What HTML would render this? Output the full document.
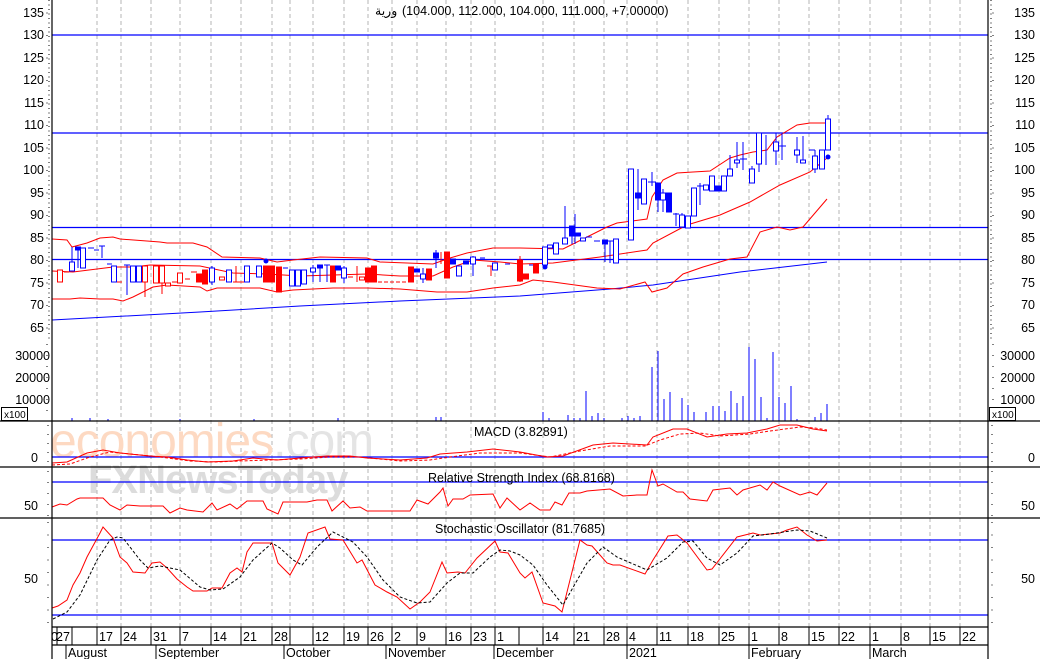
<!DOCTYPE html>
<html><head><meta charset="utf-8"><style>
html,body{margin:0;padding:0;background:#fff;}
svg{display:block;font-family:"Liberation Sans","Noto Sans CJK SC",sans-serif;}
.g{stroke:#b4b4b4;stroke-dasharray:4 3;stroke-width:1}
.bo{fill:#fff;stroke:#00f}.bf{fill:#00f;stroke:#00f}.ro{fill:#fff;stroke:#f00}.rf{fill:#f00;stroke:#f00}
.wb{stroke:#00f}.wr{stroke:#f00}
text{font-size:12.5px;fill:#000}
</style></head><body>
<svg width="1040" height="659" viewBox="0 0 1040 659" xmlns="http://www.w3.org/2000/svg">
<rect width="1040" height="659" fill="#fff"/>
<g class="g">
<line x1="97" y1="0" x2="97" y2="627"/><line x1="121" y1="0" x2="121" y2="627"/><line x1="151" y1="0" x2="151" y2="627"/><line x1="180" y1="0" x2="180" y2="627"/><line x1="211" y1="0" x2="211" y2="627"/><line x1="241" y1="0" x2="241" y2="627"/><line x1="272" y1="0" x2="272" y2="627"/><line x1="290" y1="0" x2="290" y2="627"/><line x1="313" y1="0" x2="313" y2="627"/><line x1="344" y1="0" x2="344" y2="627"/><line x1="368" y1="0" x2="368" y2="627"/><line x1="392" y1="0" x2="392" y2="627"/><line x1="417" y1="0" x2="417" y2="627"/><line x1="446" y1="0" x2="446" y2="627"/><line x1="471" y1="0" x2="471" y2="627"/><line x1="495" y1="0" x2="495" y2="627"/><line x1="543" y1="0" x2="543" y2="627"/><line x1="574" y1="0" x2="574" y2="627"/><line x1="604" y1="0" x2="604" y2="627"/><line x1="627" y1="0" x2="627" y2="627"/><line x1="657" y1="0" x2="657" y2="627"/><line x1="688" y1="0" x2="688" y2="627"/><line x1="719" y1="0" x2="719" y2="627"/><line x1="749" y1="0" x2="749" y2="627"/><line x1="779" y1="0" x2="779" y2="627"/><line x1="809" y1="0" x2="809" y2="627"/><line x1="839" y1="0" x2="839" y2="627"/><line x1="870" y1="0" x2="870" y2="627"/><line x1="901" y1="0" x2="901" y2="627"/><line x1="930" y1="0" x2="930" y2="627"/><line x1="960" y1="0" x2="960" y2="627"/>
</g>
<text x="50" y="457" style="font-size:48px;fill:#fdd9c2;letter-spacing:-1px">economies<tspan style="fill:#e4e4e4">.com</tspan></text>
<text x="88" y="493" style="font-size:40px;font-weight:bold;fill:#dcdcdc;letter-spacing:-1px">FXNewsToday</text>
<g stroke="#00f" stroke-width="1.2">
<line x1="52" y1="35" x2="988" y2="35"/><line x1="52" y1="133" x2="988" y2="133"/><line x1="52" y1="227.5" x2="988" y2="227.5"/><line x1="52" y1="259.5" x2="988" y2="259.5"/>
<line x1="52" y1="457" x2="988" y2="457"/><line x1="52" y1="482" x2="988" y2="482"/><line x1="52" y1="540" x2="988" y2="540"/><line x1="52" y1="615" x2="988" y2="615"/>
</g>
<polyline fill="none" stroke="#00f" points="52,320 200,312 300,306 400,301 520,296 610,289 653,285 740,272 827,262"/>
<g fill="none" stroke="#f00">
<polyline points="52,239 67,240 72,247 87,243 100,238 113,237 120,239 160,242 167,243 193,243 207,247 222,257 260,258 277,262 293,260 320,257 367,258 380,262 433,264 450,258 467,253 493,248 520,248 563,249 575,243 607,227 617,223 647,219 652,197 663,180 677,173 693,172 710,171 730,158 740,155 753,152 767,150 777,137 797,125 810,123 827,123"/>
<polyline points="52,271 73,272 113,267 133,267 150,265 200,266 233,273 267,274 300,276 367,274 400,276 433,276 453,267 473,260 500,262 520,264 553,263 600,257 647,250 653,243 687,225 720,215 750,202 780,185 810,172 827,158"/>
<polyline points="52,299 70,299 80,298 100,299 113,299 123,301 133,297 153,287 167,285 200,287 207,291 217,288 240,288 260,288 277,292 293,290 333,288 367,288 400,289 437,292 467,292 493,288 520,285 533,280 553,282 597,288 620,289 645,282 652,292 667,288 683,274 703,267 730,259 747,257 760,232 777,227 790,230 803,227 827,199"/>
</g>
<g stroke-width="1">
<rect class="ro" x="57.5" y="270" width="5" height="12"/>
<line class="wr" x1="64" y1="272" x2="69" y2="272"/>
<line class="wb" x1="72" y1="247" x2="72" y2="271"/><rect class="bo" x="69.5" y="262" width="5" height="9"/>
<line class="wb" x1="78" y1="247" x2="78" y2="268"/><rect class="bf" x="75.5" y="247" width="5" height="3"/>
<rect class="bo" x="80.5" y="248" width="5" height="20"/>
<line class="wb" x1="88" y1="248" x2="94" y2="248"/><line class="wb" x1="94" y1="250" x2="99" y2="250"/>
<line class="wb" x1="102" y1="246" x2="102" y2="258"/><line class="wb" x1="99" y1="246" x2="105" y2="246"/>
<line class="wb" x1="107" y1="264" x2="112" y2="264"/>
<rect class="bo" x="111.5" y="266" width="5" height="16"/><line class="wr" x1="117" y1="282" x2="122" y2="282"/>
<line class="wb" x1="127" y1="265" x2="127" y2="295"/><line class="wb" x1="124" y1="265" x2="130" y2="265"/>
<rect class="bo" x="130.5" y="266" width="5" height="16"/><rect class="bo" x="136.5" y="266" width="5" height="16"/>
<line class="wr" x1="145" y1="266" x2="145" y2="297"/><rect class="ro" x="142.5" y="266" width="5" height="16"/>
<rect class="ro" x="153.5" y="266" width="5" height="17"/>
<line class="wr" x1="162" y1="266" x2="162" y2="294"/><rect class="ro" x="159.5" y="266" width="5" height="17"/>
<rect class="ro" x="165.5" y="283" width="5" height="3"/><line class="wr" x1="172" y1="282" x2="178" y2="282"/>
<rect class="ro" x="177.5" y="273" width="5" height="10"/><line class="wr" x1="185" y1="279" x2="190" y2="279"/><line class="wr" x1="191" y1="272" x2="197" y2="272"/>
<rect class="rf" x="196.5" y="274" width="5" height="8"/><rect class="rf" x="202.5" y="270" width="5" height="14"/>
<line class="wb" x1="212" y1="266" x2="212" y2="285"/><rect class="bo" x="209.5" y="268" width="5" height="14"/>
<rect class="ro" x="219.5" y="277" width="5" height="3"/>
<rect class="bo" x="226.5" y="270" width="5" height="12"/>
<line class="wr" x1="236" y1="266" x2="236" y2="282"/><line class="wr" x1="233" y1="282" x2="244" y2="282"/>
<rect class="bo" x="244.5" y="266" width="5" height="16"/>
<rect class="bo" x="256.5" y="266" width="5" height="11"/>
<circle cx="266" cy="261" r="2.5" fill="#00f"/>
<rect class="rf" x="263.5" y="266" width="5" height="16"/><rect class="rf" x="269.5" y="266" width="5" height="16"/><rect class="rf" x="276.5" y="267" width="5" height="25"/>
<line class="wb" x1="283" y1="268" x2="288" y2="268"/>
<rect class="bo" x="289.5" y="270" width="5" height="16"/><rect class="bo" x="295.5" y="270" width="5" height="16"/><rect class="bo" x="301.5" y="270" width="5" height="14"/>
<line class="wb" x1="313" y1="265" x2="313" y2="282"/><rect class="bo" x="310.5" y="268" width="5" height="4"/>
<line class="wb" x1="320" y1="265" x2="320" y2="282"/><rect class="bf" x="317.5" y="265" width="5" height="3"/>
<line class="wb" x1="327" y1="265" x2="327" y2="282"/><line class="wb" x1="324" y1="265" x2="330" y2="265"/>
<rect class="rf" x="330.5" y="266" width="5" height="16"/>
<rect class="bf" x="335.5" y="266" width="5" height="4"/>
<line class="wb" x1="344" y1="266" x2="344" y2="283"/><rect class="bo" x="341.5" y="268" width="5" height="10"/>
<line class="wr" x1="348" y1="277" x2="353" y2="277"/><line class="wr" x1="357" y1="266" x2="357" y2="282"/>
<rect class="ro" x="359.5" y="277" width="5" height="3"/>
<rect class="rf" x="365.5" y="268" width="5" height="14"/><rect class="rf" x="371.5" y="266" width="5" height="16"/>
<line class="wr" x1="378" y1="282" x2="408" y2="282" stroke-dasharray="4 2"/>
<rect class="rf" x="408.5" y="267" width="5" height="15"/>
<rect class="bf" x="414.5" y="269" width="5" height="3"/>
<line class="wb" x1="423" y1="268" x2="423" y2="283"/><rect class="bo" x="420.5" y="274" width="5" height="5"/>
<rect class="rf" x="426.5" y="269" width="5" height="11"/>
<line class="wb" x1="436" y1="250" x2="436" y2="268"/><rect class="bf" x="433.5" y="253" width="5" height="5"/>
<line class="wr" x1="441" y1="252" x2="441" y2="264"/>
<rect class="rf" x="444.5" y="252" width="5" height="26"/>
<rect class="bf" x="450.5" y="259" width="5" height="5"/>
<rect class="bo" x="456.5" y="266" width="5" height="10"/>
<rect class="bf" x="463.5" y="261" width="5" height="3"/>
<line class="wb" x1="473" y1="256" x2="473" y2="276"/><rect class="bo" x="470.5" y="257" width="5" height="7"/>
<line class="wb" x1="480" y1="258" x2="485" y2="258"/>
<line class="wr" x1="491" y1="266" x2="491" y2="276"/><line class="wr" x1="487" y1="266" x2="494" y2="266"/>
<rect class="bo" x="492.5" y="263" width="5" height="7"/>
<line class="wb" x1="505" y1="264" x2="510" y2="264"/>
<line class="wr" x1="520" y1="256" x2="520" y2="282"/><rect class="rf" x="517.5" y="260" width="5" height="21"/>
<rect class="rf" x="523.5" y="274" width="5" height="5"/>
<line class="wb" x1="529" y1="265" x2="534" y2="265"/>
<rect class="rf" x="533.5" y="264" width="5" height="9"/>
<circle cx="545" cy="267" r="2.5" fill="#00f"/>
<rect class="bo" x="542.5" y="247" width="5" height="18"/>
<rect class="bo" x="547.5" y="245" width="5" height="3"/>
<rect class="bo" x="553.5" y="243" width="5" height="11"/>
<line class="wb" x1="565" y1="206" x2="565" y2="244"/><rect class="bo" x="562.5" y="238" width="5" height="6"/>
<line class="wb" x1="572" y1="226" x2="572" y2="244"/><rect class="bf" x="569.5" y="226" width="5" height="10"/>
<line class="wb" x1="575" y1="214" x2="575" y2="244"/><rect class="bf" x="575.5" y="233" width="5" height="3"/>
<rect class="bo" x="580.5" y="238" width="5" height="3"/><line class="wb" x1="586" y1="237" x2="592" y2="237"/>
<line class="wb" x1="594" y1="241" x2="600" y2="241"/>
<line class="wb" x1="605" y1="240" x2="605" y2="262"/><rect class="bf" x="602.5" y="240" width="5" height="4"/>
<line class="wb" x1="610" y1="241" x2="610" y2="263"/><line class="wb" x1="607" y1="241" x2="613" y2="241"/>
<rect class="bo" x="613.5" y="239" width="5" height="24"/>
<rect class="bo" x="628.5" y="169" width="5" height="71"/>
<line class="wb" x1="638" y1="169" x2="638" y2="210"/><rect class="bf" x="635.5" y="193" width="5" height="5"/>
<rect class="bo" x="641.5" y="179" width="5" height="25"/>
<line class="wb" x1="652" y1="172" x2="652" y2="186"/><line class="wb" x1="648" y1="182" x2="656" y2="182"/>
<line class="wb" x1="658" y1="183" x2="658" y2="212"/><rect class="bf" x="655.5" y="183" width="5" height="17"/>
<line class="wb" x1="663" y1="189" x2="663" y2="212"/><rect class="bo" x="660.5" y="193" width="5" height="7"/>
<rect class="bf" x="666.5" y="193" width="5" height="19"/>
<line class="wb" x1="676" y1="213" x2="676" y2="226"/><line class="wb" x1="673" y1="214" x2="679" y2="214"/>
<line class="wb" x1="682" y1="213" x2="682" y2="228"/><rect class="bo" x="679.5" y="215" width="5" height="12"/>
<rect class="bo" x="685.5" y="216" width="5" height="12"/>
<rect class="bo" x="691.5" y="188" width="5" height="28"/>
<line class="wb" x1="697" y1="186" x2="703" y2="186"/><line class="wb" x1="700" y1="183" x2="700" y2="205"/>
<rect class="bo" x="703.5" y="185" width="5" height="5"/>
<line class="wb" x1="712" y1="176" x2="712" y2="191"/><rect class="bo" x="709.5" y="176" width="5" height="15"/>
<rect class="bf" x="715.5" y="186" width="5" height="5"/>
<rect class="bo" x="721.5" y="176" width="5" height="15"/>
<line class="wb" x1="730" y1="155" x2="730" y2="176"/><rect class="bo" x="727.5" y="169" width="5" height="7"/>
<line class="wb" x1="737" y1="142" x2="737" y2="168"/><rect class="bo" x="734.5" y="160" width="5" height="3"/>
<line class="wb" x1="743" y1="142" x2="743" y2="170"/><line class="wb" x1="740" y1="159" x2="747" y2="159"/>
<line class="wb" x1="752" y1="166" x2="752" y2="183"/><rect class="bo" x="749.5" y="169" width="5" height="14"/>
<line class="wb" x1="759" y1="133" x2="759" y2="172"/><rect class="bo" x="756.5" y="133" width="5" height="31"/>
<line class="wb" x1="766" y1="135" x2="766" y2="165"/>
<line class="wb" x1="776" y1="133" x2="776" y2="165"/><rect class="bo" x="773.5" y="142" width="5" height="9"/>
<line class="wb" x1="782" y1="133" x2="782" y2="160"/><line class="wb" x1="779" y1="146" x2="786" y2="146"/>
<line class="wb" x1="797" y1="137" x2="797" y2="163"/><rect class="bo" x="794.5" y="150" width="5" height="5"/>
<line class="wb" x1="803" y1="136" x2="803" y2="163"/><rect class="bo" x="800.5" y="160" width="5" height="3"/>
<line class="wb" x1="809" y1="150" x2="815" y2="150"/>
<line class="wb" x1="815" y1="150" x2="815" y2="173"/><rect class="bo" x="812.5" y="156" width="5" height="13"/>
<rect class="bo" x="819.5" y="150" width="5" height="19"/>
<line class="wb" x1="828" y1="115" x2="828" y2="150"/><rect class="bo" x="825.5" y="119" width="5" height="31"/>
<circle cx="828" cy="157" r="2.5" fill="#00f"/>
</g>
<g stroke="#00f">
<line x1="652" y1="421" x2="652" y2="367"/><line x1="658" y1="421" x2="658" y2="351"/><line x1="664" y1="421" x2="664" y2="399"/><line x1="670" y1="421" x2="670" y2="392"/><line x1="682" y1="421" x2="682" y2="398"/><line x1="688" y1="421" x2="688" y2="405"/><line x1="694" y1="421" x2="694" y2="412"/><line x1="706" y1="421" x2="706" y2="412"/><line x1="713" y1="421" x2="713" y2="406"/><line x1="719" y1="421" x2="719" y2="406"/><line x1="725" y1="421" x2="725" y2="411"/><line x1="731" y1="421" x2="731" y2="391"/><line x1="737" y1="421" x2="737" y2="403"/><line x1="743" y1="421" x2="743" y2="396"/><line x1="749" y1="421" x2="749" y2="347"/><line x1="755" y1="421" x2="755" y2="359"/><line x1="761" y1="421" x2="761" y2="397"/><line x1="767" y1="421" x2="767" y2="418"/><line x1="773" y1="421" x2="773" y2="352"/><line x1="779" y1="421" x2="779" y2="397"/><line x1="785" y1="421" x2="785" y2="403"/><line x1="791" y1="421" x2="791" y2="386"/><line x1="797" y1="421" x2="797" y2="419"/><line x1="815" y1="421" x2="815" y2="417"/><line x1="821" y1="421" x2="821" y2="413"/><line x1="827" y1="421" x2="827" y2="404"/>
<line x1="543" y1="421" x2="543" y2="412"/><line x1="549" y1="421" x2="549" y2="418"/><line x1="568" y1="421" x2="568" y2="415"/><line x1="574" y1="421" x2="574" y2="418"/><line x1="580" y1="421" x2="580" y2="418"/><line x1="586" y1="421" x2="586" y2="391"/><line x1="592" y1="421" x2="592" y2="416"/><line x1="598" y1="421" x2="598" y2="413"/><line x1="604" y1="421" x2="604" y2="418"/><line x1="622" y1="421" x2="622" y2="418"/><line x1="628" y1="421" x2="628" y2="416"/><line x1="634" y1="421" x2="634" y2="418"/><line x1="640" y1="421" x2="640" y2="416"/>
<line x1="72" y1="421" x2="72" y2="418"/><line x1="90" y1="421" x2="90" y2="418"/><line x1="108" y1="421" x2="108" y2="419"/><line x1="180" y1="421" x2="180" y2="419"/><line x1="254" y1="421" x2="254" y2="419"/><line x1="338" y1="421" x2="338" y2="418"/><line x1="436" y1="421" x2="436" y2="417"/><line x1="441" y1="421" x2="441" y2="417"/>
</g>
<polyline fill="none" stroke="#f00" points="52,463 67,462 87,453 103,450 120,453 150,456 167,457 187,460 207,462 233,461 253,458 277,460 300,458 327,456 350,456 367,458 400,460 427,458 440,454 467,452 493,449 520,452 547,457 563,456 593,445 613,443 647,445 653,437 673,429 687,429 707,437 727,434 747,433 767,429 780,425 797,425 813,429 827,431"/>
<polyline fill="none" stroke="#f00" stroke-dasharray="3 2" points="52,465 70,464 90,457 110,452 130,454 160,457 190,461 215,462 240,461 270,460 300,459 330,457 360,457 400,461 430,460 450,457 480,453 520,453 550,457 580,451 610,446 645,446 660,440 680,434 700,433 720,436 750,434 770,431 800,427 815,428 827,430"/>
<polyline fill="none" stroke="#f00" points="52,507 60,504 67,505 77,499 80,498 103,498 110,505 120,510 127,505 140,506 163,506 170,513 180,508 187,510 203,512 212,503 217,510 230,504 237,509 247,501 263,501 267,509 278,514 283,502 307,502 317,500 327,500 332,511 343,501 350,508 360,507 367,511 410,511 417,500 428,504 440,492 443,488 448,506 453,499 463,499 470,495 493,494 500,508 507,498 520,510 530,503 540,510 550,510 555,502 562,505 569,493 580,493 587,491 610,489 623,496 637,495 647,495 652,470 658,486 663,484 677,492 683,492 690,499 707,501 713,490 730,488 737,495 743,490 760,485 767,490 773,482 780,486 800,495 810,492 817,495 827,483"/>
<polyline fill="none" stroke="#f00" points="52,608 58,606 67,600 73,585 80,573 87,557 100,533 103,527 113,538 120,557 127,563 133,572 145,573 152,563 160,562 167,568 177,579 187,587 193,591 207,591 212,588 222,588 230,573 237,568 242,572 247,552 253,543 272,543 278,563 290,575 300,557 308,533 325,527 330,539 343,540 357,563 362,560 375,585 387,592 397,597 410,609 420,602 430,592 442,562 447,573 458,572 465,573 477,558 495,541 500,552 508,553 520,573 525,578 532,572 543,603 555,606 562,612 580,540 587,545 592,546 607,563 613,565 620,565 645,574 653,560 668,536 677,535 687,543 707,570 712,569 737,537 753,533 760,535 780,533 787,530 797,527 807,535 817,541 827,540"/>
<polyline fill="none" stroke="#000" stroke-dasharray="3 2" points="53,619 67,612 80,595 97,560 110,540 117,537 123,538 140,560 148,568 160,566 180,570 200,587 210,590 223,589 240,577 253,560 272,543 280,548 293,560 302,565 317,547 333,532 353,542 367,557 383,580 400,597 417,603 430,602 447,583 460,573 473,573 490,557 500,550 510,551 520,555 533,565 547,585 563,605 587,563 603,547 617,557 647,570 667,558 683,542 693,541 707,558 720,565 737,553 753,536 770,534 797,530 810,531 827,538"/>
<g stroke="#000" stroke-width="1.2">
<line x1="52" y1="0" x2="52" y2="659"/><line x1="988" y1="0" x2="988" y2="659"/>
<line x1="0" y1="421" x2="1040" y2="421"/><line x1="0" y1="467" x2="1040" y2="467"/><line x1="0" y1="518" x2="1040" y2="518"/>
<line x1="52" y1="627" x2="988" y2="627"/><line x1="52" y1="645" x2="988" y2="645"/>
</g>
<g stroke="#000">
<line x1="49" y1="0" x2="49" y2="340" stroke-dasharray="1 3.5"/>
<line x1="991" y1="0" x2="991" y2="340" stroke-dasharray="1 3.5"/>
<line x1="47" y1="12.5" x2="47" y2="340" stroke-dasharray="1 21.5"/><line x1="993" y1="12.5" x2="993" y2="340" stroke-dasharray="1 21.5"/>
<line x1="47" y1="344" x2="47" y2="421" stroke-dasharray="1 10"/><line x1="993" y1="344" x2="993" y2="421" stroke-dasharray="1 10"/>
<line x1="48" y1="425" x2="48" y2="467" stroke-dasharray="1 8"/><line x1="992" y1="425" x2="992" y2="467" stroke-dasharray="1 8"/>
<line x1="48" y1="471" x2="48" y2="518" stroke-dasharray="1 10"/><line x1="992" y1="471" x2="992" y2="518" stroke-dasharray="1 10"/>
<line x1="48" y1="522" x2="48" y2="627" stroke-dasharray="1 11.5"/><line x1="992" y1="522" x2="992" y2="627" stroke-dasharray="1 11.5"/>
</g>
<g stroke="#000">
<line x1="57" y1="627" x2="57" y2="645"/><line x1="72" y1="627" x2="72" y2="645"/><line x1="97" y1="627" x2="97" y2="645"/><line x1="121" y1="627" x2="121" y2="645"/><line x1="151" y1="627" x2="151" y2="645"/><line x1="180" y1="627" x2="180" y2="645"/><line x1="211" y1="627" x2="211" y2="645"/><line x1="241" y1="627" x2="241" y2="645"/><line x1="272" y1="627" x2="272" y2="645"/><line x1="290" y1="627" x2="290" y2="645"/><line x1="313" y1="627" x2="313" y2="645"/><line x1="344" y1="627" x2="344" y2="645"/><line x1="368" y1="627" x2="368" y2="645"/><line x1="392" y1="627" x2="392" y2="645"/><line x1="417" y1="627" x2="417" y2="645"/><line x1="446" y1="627" x2="446" y2="645"/><line x1="471" y1="627" x2="471" y2="645"/><line x1="495" y1="627" x2="495" y2="645"/><line x1="519" y1="627" x2="519" y2="645"/><line x1="543" y1="627" x2="543" y2="645"/><line x1="574" y1="627" x2="574" y2="645"/><line x1="604" y1="627" x2="604" y2="645"/><line x1="627" y1="627" x2="627" y2="645"/><line x1="657" y1="627" x2="657" y2="645"/><line x1="688" y1="627" x2="688" y2="645"/><line x1="719" y1="627" x2="719" y2="645"/><line x1="749" y1="627" x2="749" y2="645"/><line x1="779" y1="627" x2="779" y2="645"/><line x1="809" y1="627" x2="809" y2="645"/><line x1="839" y1="627" x2="839" y2="645"/><line x1="870" y1="627" x2="870" y2="645"/><line x1="901" y1="627" x2="901" y2="645"/><line x1="930" y1="627" x2="930" y2="645"/><line x1="960" y1="627" x2="960" y2="645"/>
<line x1="66" y1="645" x2="66" y2="659"/><line x1="156" y1="645" x2="156" y2="659"/><line x1="284" y1="645" x2="284" y2="659"/><line x1="386" y1="645" x2="386" y2="659"/><line x1="494" y1="645" x2="494" y2="659"/><line x1="627" y1="645" x2="627" y2="659"/><line x1="749" y1="645" x2="749" y2="659"/><line x1="870" y1="645" x2="870" y2="659"/>
</g>
<rect x="1.5" y="407.5" width="26" height="13" fill="#fff" stroke="#000"/><text x="4" y="418" style="font-size:10px">x100</text>
<rect x="989.5" y="407.5" width="26" height="13" fill="#fff" stroke="#000"/><text x="992" y="418" style="font-size:10px">x100</text>
<g text-anchor="end">
<text x="44" y="17">135</text><text x="44" y="39">130</text><text x="44" y="62">125</text><text x="44" y="84">120</text><text x="44" y="107">115</text><text x="44" y="129">110</text><text x="44" y="152">105</text><text x="44" y="174">100</text><text x="44" y="197">95</text><text x="44" y="219">90</text><text x="44" y="242">85</text><text x="44" y="264">80</text><text x="44" y="287">75</text><text x="44" y="309">70</text><text x="44" y="332">65</text>
<text x="50" y="360">30000</text><text x="50" y="382">20000</text><text x="50" y="404">10000</text>
<text x="38" y="462">0</text><text x="38" y="510">50</text><text x="38" y="583">50</text>
<text x="1035" y="17">135</text><text x="1035" y="39">130</text><text x="1035" y="62">125</text><text x="1035" y="84">120</text><text x="1035" y="107">115</text><text x="1035" y="129">110</text><text x="1035" y="152">105</text><text x="1035" y="174">100</text><text x="1035" y="197">95</text><text x="1035" y="219">90</text><text x="1035" y="242">85</text><text x="1035" y="264">80</text><text x="1035" y="287">75</text><text x="1035" y="309">70</text><text x="1035" y="332">65</text>
<text x="1035" y="360">30000</text><text x="1035" y="382">20000</text><text x="1035" y="404">10000</text>
<text x="1035" y="462">0</text><text x="1035" y="510">50</text><text x="1035" y="583">50</text>
</g>
<text x="375" y="15">ورية</text>
<text x="402" y="15">(104.000, 112.000, 104.000, 111.000, +7.00000)</text>
<text x="474" y="436">MACD (3.82891)</text>
<text x="428" y="482">Relative Strength Index (68.8168)</text>
<text x="435" y="533">Stochastic Oscillator (81.7685)</text>
<g style="font-size:12.5px">
<text x="51" y="641">0</text><text x="56" y="641">27</text><text x="99" y="641">17</text><text x="123" y="641">24</text><text x="153" y="641">31</text><text x="182" y="641">7</text><text x="213" y="641">14</text><text x="243" y="641">21</text><text x="274" y="641">28</text><text x="315" y="641">12</text><text x="346" y="641">19</text><text x="370" y="641">26</text><text x="394" y="641">2</text><text x="419" y="641">9</text><text x="448" y="641">16</text><text x="473" y="641">23</text><text x="497" y="641">1</text><text x="545" y="641">14</text><text x="576" y="641">21</text><text x="606" y="641">28</text><text x="629" y="641">4</text><text x="659" y="641">11</text><text x="690" y="641">18</text><text x="721" y="641">25</text><text x="751" y="641">1</text><text x="781" y="641">8</text><text x="811" y="641">15</text><text x="841" y="641">22</text><text x="872" y="641">1</text><text x="903" y="641">8</text><text x="932" y="641">15</text><text x="962" y="641">22</text>
<text x="68" y="657">August</text><text x="158" y="657">September</text><text x="286" y="657">October</text><text x="388" y="657">November</text><text x="496" y="657">December</text><text x="629" y="657">2021</text><text x="751" y="657">February</text><text x="872" y="657">March</text>
</g>
</svg>
</body></html>
